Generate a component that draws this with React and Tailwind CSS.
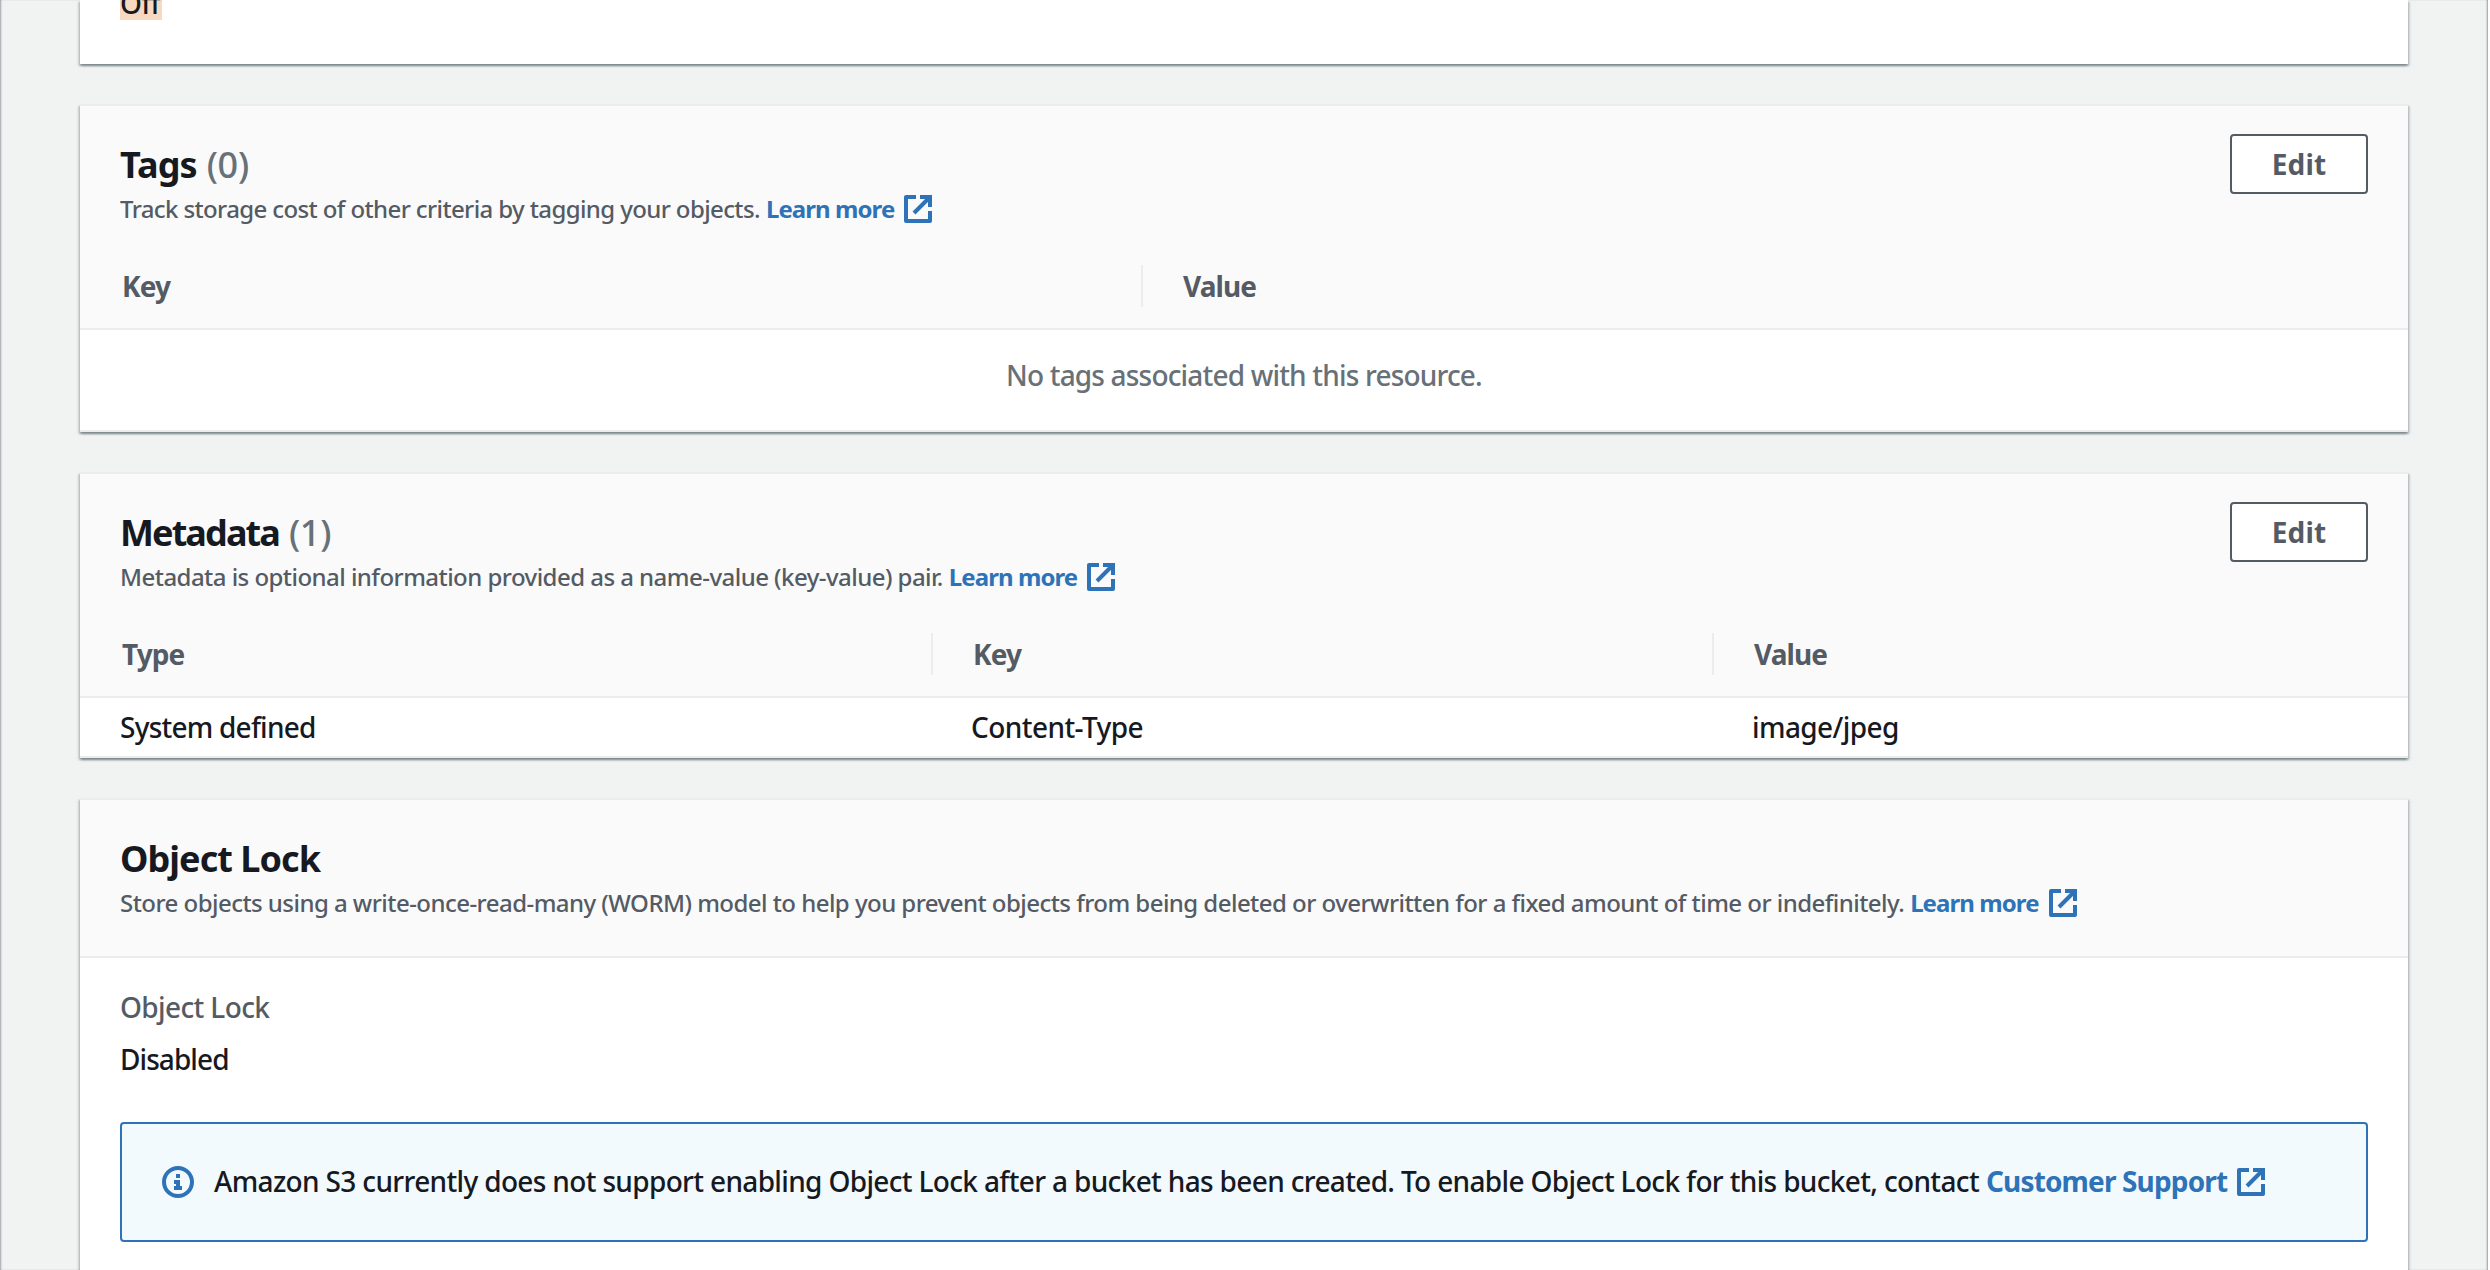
const cardShadow =
  "shadow-[0_2px_2px_0_rgba(0,28,36,0.3),2px_2px_2px_0_rgba(0,28,36,0.15),-2px_2px_2px_0_rgba(0,28,36,0.15)]";

function ExternalIcon({ className = "" }) {
  return (
    <svg viewBox="0 0 32 32" className={`size-8 shrink-0 ${className}`} fill="none" stroke="#2e73b8" strokeWidth="4">
      <path d="M14 4H4V28H28V18" strokeLinejoin="round" />
      <path d="M18 4H28V14" />
      <path d="M27 5L12 20" />
    </svg>
  );
}

function InfoIcon() {
  return (
    <svg viewBox="0 0 32 32" className="size-8 shrink-0" fill="none">
      <circle cx="16" cy="16" r="14" stroke="#2e73b8" strokeWidth="4" />
      <path d="M14 8H18V12H14ZM12 14H18V20H20V24H12V20H14V18H12Z" fill="#2e73b8" />
    </svg>
  );
}

function LearnMore() {
  return (
    <a className="ml-[6px] flex items-center font-bold text-[#2e73b8]">
      <span className="tracking-[-0.926px]">Learn more</span>
      <ExternalIcon className="ml-2" />
    </a>
  );
}

function Card({ children, className = "" }) {
  return (
    <section className={`flex flex-col border-t-2 border-[#eaeded] bg-white ${cardShadow} ${className}`}>
      {children}
    </section>
  );
}

function Header({ title, titleClass, count, text, textClass, editable, className, children }) {
  return (
    <header className={`flex flex-col border-b-2 border-[#eaeded] bg-[#fafafa] ${className}`}>
      <div className="flex items-start justify-between pl-10 pr-10">
        <div className="flex flex-col pt-[37px]">
          <h2 className="flex gap-[10px] text-[36px] leading-[44px]">
            <span className={`font-bold text-[#16191f] ${titleClass}`}>{title}</span>
            {count && <span className="tracking-[-0.31px] text-[#687078]">{count}</span>}
          </h2>
          <div className="mt-[6px] flex items-center text-2xl leading-8 text-[#545b64]">
            <p className={`whitespace-nowrap ${textClass}`}>{text}</p>
            <LearnMore />
          </div>
        </div>
        {editable && (
          <button className="mt-7 h-[60px] w-[138px] rounded-[4px] border-2 border-[#545b64] bg-white pb-px text-[28px] leading-10 font-bold tracking-[0.1px] text-[#545b64]">
            Edit
          </button>
        )}
      </div>
      {children}
    </header>
  );
}

function HeadCell({ children, className = "", divided }) {
  return (
    <div className={`h-[42px] text-[28px] leading-[42px] font-bold tracking-[-0.9px] text-[#545b64] ${divided ? "border-l-2 border-[#eaeded] pl-10" : "pl-[42px]"} ${className}`}>
      {children}
    </div>
  );
}

export default function App() {
  return (
    <div className="h-[1270px] w-full overflow-hidden bg-white text-[#16191f]">
      <main className="flex h-full w-[2488px] flex-col gap-10 bg-[#f1f3f3] px-20 font-['Noto_Sans','Open_Sans',sans-serif] text-[28px] leading-10 font-medium shadow-[inset_2px_0_2px_-1px_rgba(0,7,22,0.35),inset_-2px_0_2px_-1px_rgba(0,28,36,0.4)]">
        <section className={`flex h-16 shrink-0 items-start bg-white pl-10 ${cardShadow}`}>
          <div className="flex h-5 items-end">
            <span className="h-[38px] w-[42px] bg-[#f6d9c0] leading-[43px] tracking-[-0.7px]">Off</span>
          </div>
        </section>

        <Card className="shrink-0">
          <Header
            title="Tags"
            titleClass="tracking-[-0.9px]"
            count="(0)"
            text="Track storage cost of other criteria by tagging your objects."
            textClass="tracking-[-0.615px]"
            editable
            className="h-[224px]"
          >
            <div className="mt-10 flex">
              <HeadCell className="w-[1061px]">Key</HeadCell>
              <HeadCell divided>Value</HeadCell>
            </div>
          </Header>
          <div className="flex h-[102px] justify-center border-b-2 border-[#eaeded] pt-[25px] tracking-[-0.82px] text-[#687078]">
            No tags associated with this resource.
          </div>
        </Card>

        <Card className="shrink-0">
          <Header
            title="Metadata"
            titleClass="tracking-[-1.9px]"
            count="(1)"
            text="Metadata is optional information provided as a name-value (key-value) pair."
            textClass="tracking-[-0.54px]"
            editable
            className="h-[224px]"
          >
            <div className="mt-10 flex">
              <HeadCell className="w-[851px]">Type</HeadCell>
              <HeadCell divided className="w-[781px]">Key</HeadCell>
              <HeadCell divided>Value</HeadCell>
            </div>
          </Header>
          <div className="flex h-[60px] border-b-2 border-[#eaeded] pt-[9px] pl-10">
            <span className="w-[851px] tracking-[-0.77px]">System defined</span>
            <span className="w-[781px] tracking-[-0.564px]">Content-Type</span>
            <span className="tracking-[-0.6px]">image/jpeg</span>
          </div>
        </Card>

        <Card className="h-[520px] shrink-0">
          <Header
            title="Object Lock"
            titleClass="tracking-[-0.95px]"
            text="Store objects using a write-once-read-many (WORM) model to help you prevent objects from being deleted or overwritten for a fixed amount of time or indefinitely."
            textClass="tracking-[-0.54px]"
            className="h-[158px]"
          />
          <div className="flex flex-col px-10 pt-[29px]">
            <span className="tracking-[-0.62px] text-[#545b64]">Object Lock</span>
            <span className="mt-3 tracking-[-0.93px]">Disabled</span>
            <div className="mt-[43px] flex h-[120px] items-center rounded-[4px] border-2 border-[#2e73b8] bg-[#f2fafd] pl-10">
              <InfoIcon />
              <p className="ml-5 pb-[2px] whitespace-nowrap tracking-[-0.655px]">
                Amazon S3 currently does not support enabling Object Lock after a bucket has been created. To enable Object Lock for this bucket, contact
              </p>
              <a className="ml-[7px] flex items-center pb-[2px] font-bold text-[#2e73b8]">
                <span className="tracking-[-0.85px]">Customer Support</span>
                <ExternalIcon className="mt-[2px] ml-2" />
              </a>
            </div>
          </div>
        </Card>
      </main>
    </div>
  );
}
